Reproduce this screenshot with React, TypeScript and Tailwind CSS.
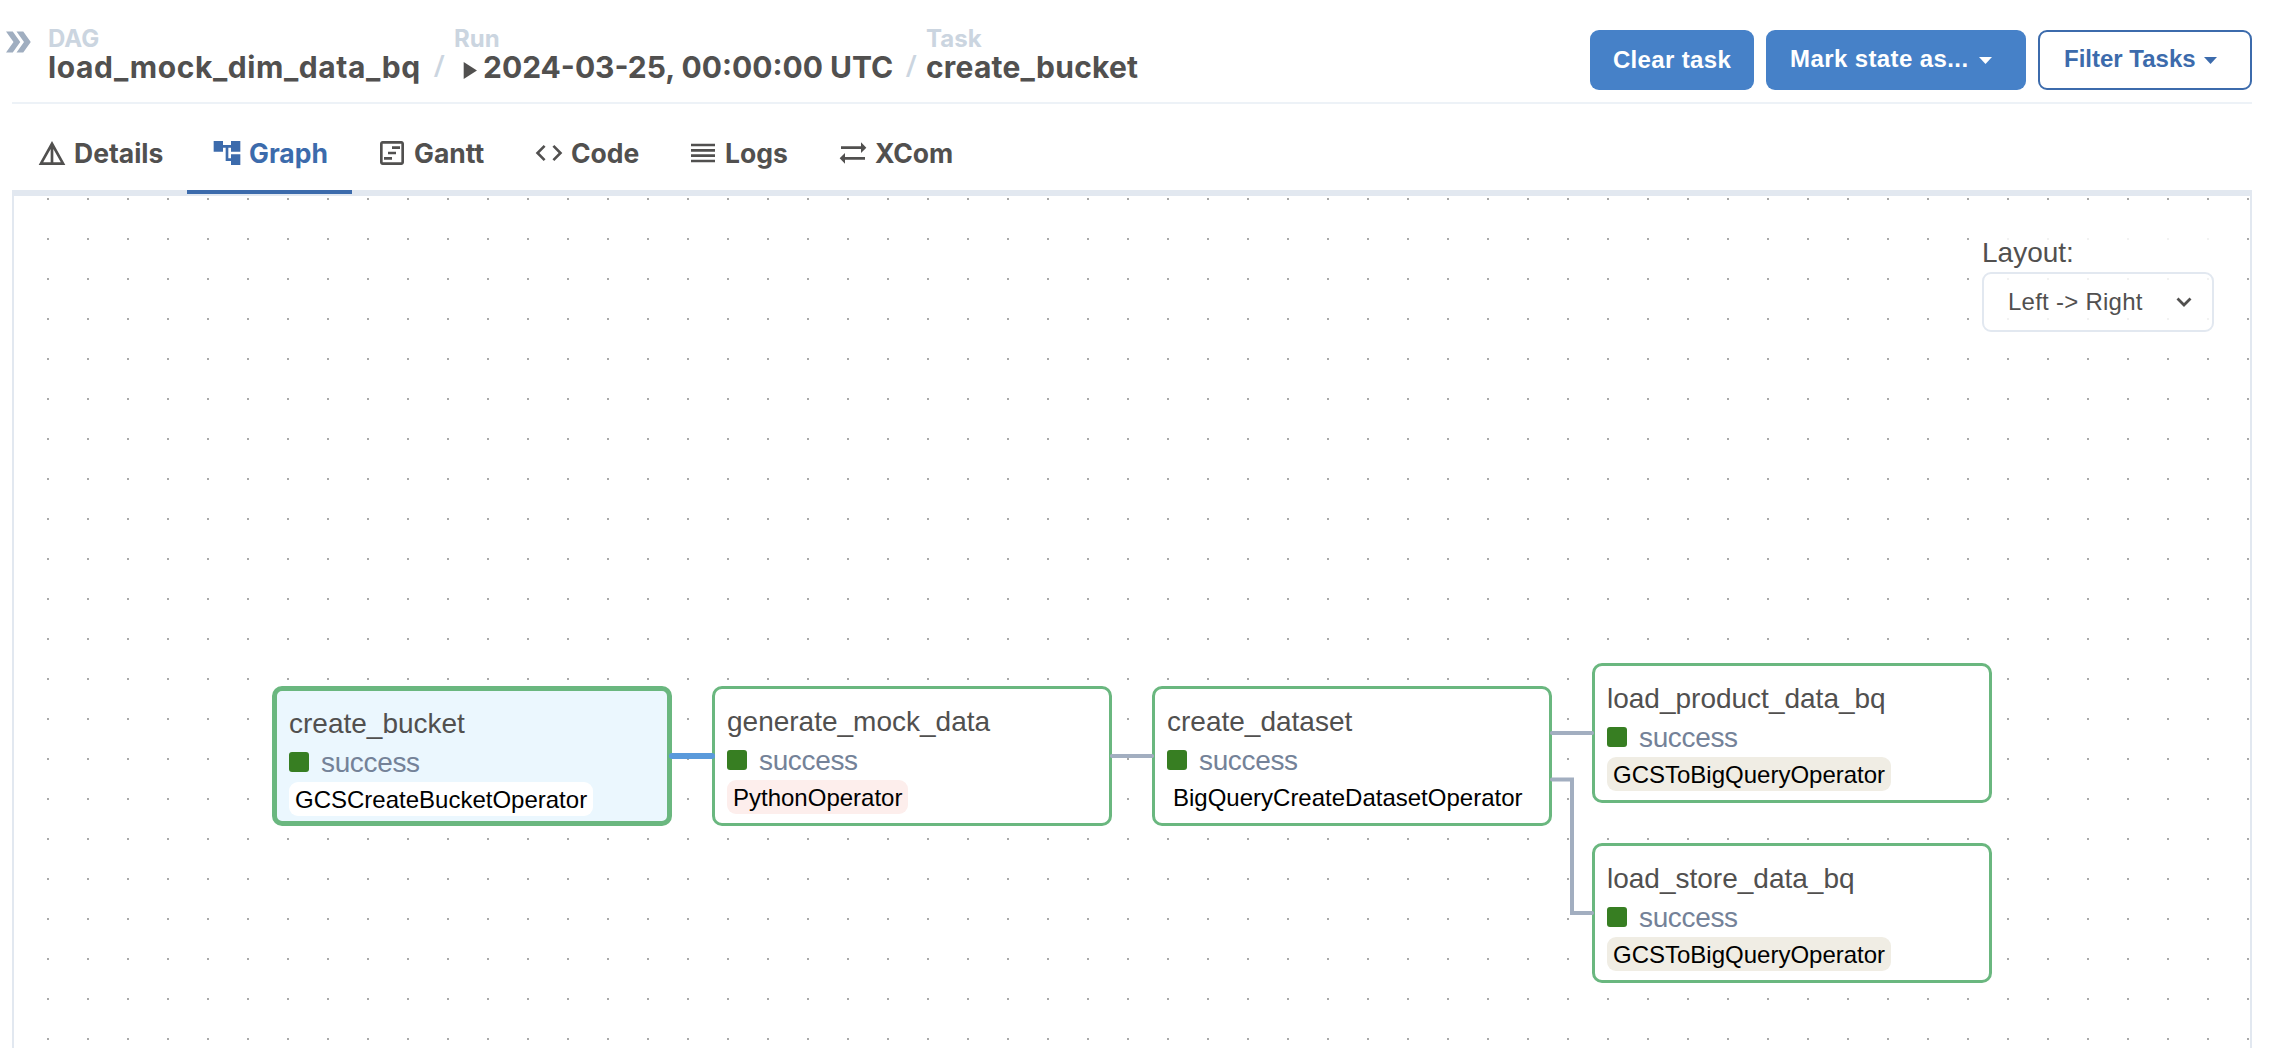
import React from 'react';

const ICONS = {
  details: 'M12 3L2 21h20L12 3zm1 5.92L18.6 19H13V8.92zm-2 0V19H5.4L11 8.92z',
  graph: 'M22 11V3h-7v3H9V3H2v8h7V8h2v10h4v3h7v-8h-7v3h-2V8h2v3z',
  gantt:
    'M19 3H5c-1.1 0-2 .9-2 2v14c0 1.1.9 2 2 2h14c1.1 0 2-.9 2-2V5c0-1.1-.9-2-2-2zm0 16H5V5h14v14zM12 7h6v2h-6zM9 11h6v2H9zM6 15h6v2H6z',
  code: 'M9.4 16.6L4.8 12l4.6-4.6L8 6l-6 6 6 6 1.4-1.4zm5.2 0l4.6-4.6-4.6-4.6L16 6l6 6-6 6-1.4-1.4z',
  logs: 'M3 15h18v-2H3v2zm0 4h18v-2H3v2zm0-8h18V9H3v2zm0-6v2h18V5H3z',
  xcom: 'M22 8l-4-4v3H3v2h15v3l4-4zM2 16l4 4v-3h15v-2H6v-3l-4 4z',
  play: 'M8 5v14l11-7z',
  doubleArrow: 'M15.5 5H11l5 7-5 7h4.5l5-7zM8.5 5H4l5 7-5 7h4.5l5-7z',
};

function Icon({ d, className }: { d: string; className: string }) {
  return (
    <svg viewBox="0 0 24 24" fill="currentColor" className={`shrink-0 ${className}`}>
      <path d={d} />
    </svg>
  );
}

function Caret() {
  return (
    <svg viewBox="0 0 13 7" fill="currentColor" className="mt-px h-[7px] w-[13px] shrink-0">
      <path d="M0 0h13L6.5 7z" />
    </svg>
  );
}

function Crumb({ label, className, children }: { label: string; className: string; children: React.ReactNode }) {
  return (
    <div className={`flex flex-col ${className}`}>
      <span className="text-[24px] leading-[26px] text-[#cbd5e0]">{label}</span>
      <span className="flex h-[30px] items-center whitespace-nowrap text-[30px] leading-[30px]">{children}</span>
    </div>
  );
}

function Slash({ className }: { className: string }) {
  return (
    <span
      className={`shrink-0 self-end text-center font-['Liberation_Sans',sans-serif] text-[30px] leading-[30px] font-normal text-[#cbd5e0] ${className}`}
    >
      <span className="inline-block scale-x-125">/</span>
    </span>
  );
}

const TABS = [
  { name: 'Details', icon: ICONS.details, width: 'w-[175px]', active: false },
  { name: 'Graph', icon: ICONS.graph, width: 'w-[165px]', active: true },
  { name: 'Gantt', icon: ICONS.gantt, width: 'w-[157px]', active: false },
  { name: 'Code', icon: ICONS.code, width: 'w-[154px]', active: false },
  { name: 'Logs', icon: ICONS.logs, width: 'w-[150px]', active: false },
  { name: 'XCom', icon: ICONS.xcom, width: 'w-[166px]', active: false },
];

const NODES = [
  { name: 'create_bucket', op: 'GCSCreateBucketOperator', badge: 'bg-white', pos: 'left-[258px] top-[490px]', selected: true },
  { name: 'generate_mock_data', op: 'PythonOperator', badge: 'bg-[#fdeeec]', pos: 'left-[698px] top-[490px]', selected: false },
  { name: 'create_dataset', op: 'BigQueryCreateDatasetOperator', badge: 'bg-white', pos: 'left-[1138px] top-[490px]', selected: false },
  { name: 'load_product_data_bq', op: 'GCSToBigQueryOperator', badge: 'bg-[#f0ede4]', pos: 'left-[1578px] top-[467px]', selected: false },
  { name: 'load_store_data_bq', op: 'GCSToBigQueryOperator', badge: 'bg-[#f0ede4]', pos: 'left-[1578px] top-[647px]', selected: false },
];

function TaskNode({ node }: { node: (typeof NODES)[number] }) {
  return (
    <div
      className={`absolute flex h-[140px] w-[400px] flex-col items-start rounded-[10px] border-[#6ab77f] px-3 pt-[14px] ${node.pos} ${
        node.selected ? 'border-[5px] bg-[#ebf7fe]' : 'border-[3px] bg-white'
      }`}
    >
      <div className="h-9 text-[28px] leading-[38px]">{node.name}</div>
      <div className="mt-[3px] flex h-9 items-center gap-3 text-[28px] text-[#748298]">
        <span className="size-5 rounded-[3px] bg-[#377e22]" />
        <span className="mt-[2px] leading-9 tracking-[-0.35px]">success</span>
      </div>
      <div className={`mt-[2px] h-[34px] rounded-[9px] px-[6px] text-[24px] leading-[36px] text-black ${node.badge}`}>
        {node.op}
      </div>
    </div>
  );
}

export default function App() {
  return (
    <div className="flex h-[1048px] w-[2270px] flex-col overflow-hidden bg-white font-['Liberation_Sans',Arial,sans-serif] text-[#51504f]">
      <header className="flex h-[102px] shrink-0">
        <Icon d={ICONS.doubleArrow} className="mt-[24px] size-9 text-[#a0aec0]" />
        <div className="mt-[26px] ml-3 flex h-[56px] font-['Inter',sans-serif] font-bold">
          <Crumb label="DAG" className="w-[376px]">
            <span className="tracking-[0.57px]">load_mock_dim_data_bq</span>
          </Crumb>
          <Slash className="w-[30px]" />
          <Crumb label="Run" className="w-[442px]">
            <Icon d={ICONS.play} className="mt-[6px] size-[29px]" />
            <span>2024-03-25, 00:00:00 UTC</span>
          </Crumb>
          <Slash className="w-[30px]" />
          <Crumb label="Task" className="">
            <span className="tracking-[0.22px]">create_bucket</span>
          </Crumb>
        </div>
        <div className="mt-[30px] mr-[18px] ml-auto flex h-[60px] gap-3 text-[24px] font-bold whitespace-nowrap">
          <button className="w-[164px] rounded-[9px] bg-[#4681c8] tracking-[0.35px] text-white">Clear task</button>
          <button className="flex w-[260px] items-center rounded-[9px] bg-[#4681c8] pl-6 text-white">
            <span className="w-[189px] pb-[2px] text-left tracking-[0.4px]">Mark state as...</span>
            <Caret />
          </button>
          <button className="flex w-[214px] items-center rounded-[9px] border-2 border-[#3c6bac] pl-6 text-[#3c6bac]">
            <span className="w-[140px] pb-[2px] text-left">Filter Tasks</span>
            <Caret />
          </button>
        </div>
      </header>

      <div className="mr-[18px] ml-3 h-[2px] shrink-0 bg-[#edf2f7]" />

      <nav className="mr-[18px] ml-3 flex h-[90px] shrink-0 font-['Inter',sans-serif] text-[26.5px] font-bold">
        {TABS.map((t) => (
          <div
            key={t.name}
            className={`flex items-center gap-[6px] border-b-4 pt-3 pl-6 ${t.width} ${
              t.active ? 'border-[#3c6bac] text-[#3c6bac]' : 'border-[#e2e8f0]'
            }`}
          >
            <Icon d={t.icon} className="size-8" />
            <span className="pt-[2px]">{t.name}</span>
          </div>
        ))}
        <div className="flex-1 border-b-4 border-[#e2e8f0]" />
      </nav>

      <main className="relative mr-[18px] ml-3 flex-1 overflow-hidden border-x-2 border-t-2 border-[#e2e8f0]">
        <svg className="absolute inset-0 h-full w-full">
          <defs>
            <pattern id="dots" x="33" y="2" width="40" height="40" patternUnits="userSpaceOnUse">
              <rect width="2" height="2" fill="#a9a9a9" />
            </pattern>
          </defs>
          <rect width="100%" height="100%" fill="url(#dots)" />
        </svg>

        {NODES.map((n) => (
          <TaskNode key={n.name} node={n} />
        ))}

        <svg className="absolute inset-0 h-full w-full" fill="none" stroke="#a2aec0" strokeWidth="4" strokeLinecap="round">
          <path d="M658 560H698" stroke="#5a9adb" strokeWidth="6" />
          <path d="M1098 560H1138" />
          <path d="M1538 537H1578" />
          <path d="M1538 583.5H1558V717H1578" />
        </svg>

        <div className="absolute top-[32px] right-[36px] flex w-[232px] flex-col bg-white/85">
          <label className="h-[44px] text-[28px] leading-[50px]">Layout:</label>
          <div className="flex h-[60px] items-center justify-between rounded-[9px] border-2 border-[#e2e8f0] pr-5 pl-6 text-[24px] tracking-[0.25px]">
            Left -&gt; Right
            <svg viewBox="0 0 16 10" className="h-[10px] w-[16px]" fill="none" stroke="currentColor" strokeWidth="2.8">
              <path d="M1.5 1.5L8 8l6.5-6.5" />
            </svg>
          </div>
        </div>
      </main>
    </div>
  );
}
